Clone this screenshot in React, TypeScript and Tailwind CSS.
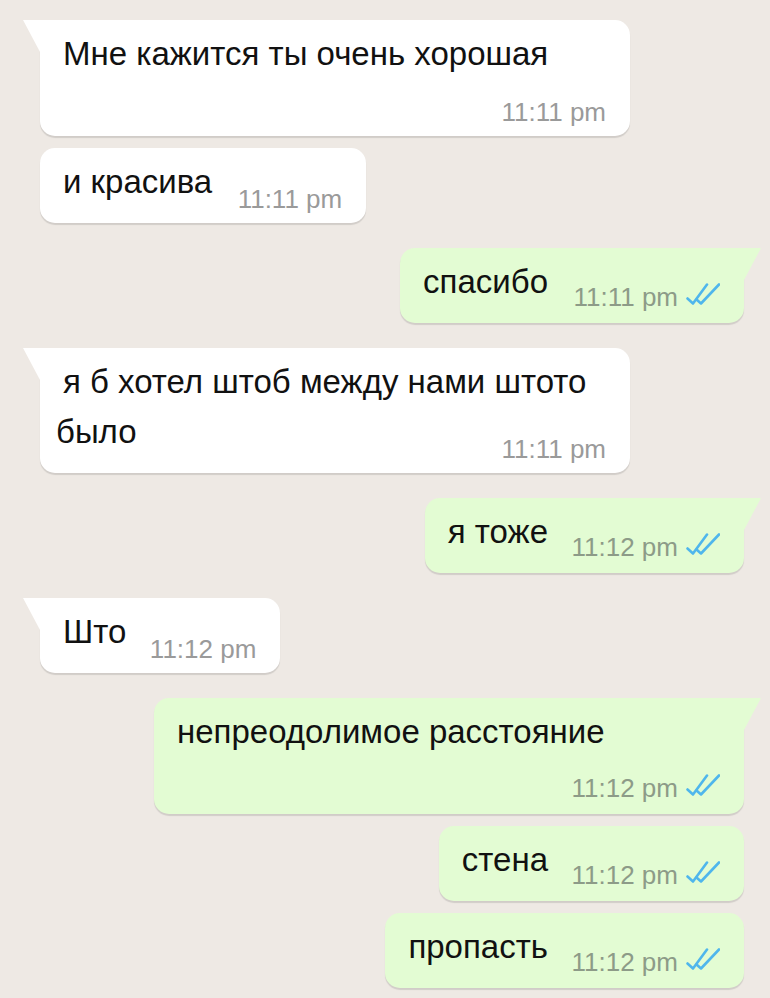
import React from 'react'

type Msg = {
  text: string
  time: string
  out?: boolean
  tail?: boolean
  gap: 'first' | 'same' | 'switch'
}

const MESSAGES: Msg[] = [
  { text: 'Мне кажится ты очень хорошая', time: '11:11 pm', tail: true, gap: 'first' },
  { text: 'и красива', time: '11:11 pm', gap: 'same' },
  { text: 'спасибо', time: '11:11 pm', out: true, tail: true, gap: 'switch' },
  { text: 'я б хотел штоб между нами штото было', time: '11:11 pm', tail: true, gap: 'switch' },
  { text: 'я тоже', time: '11:12 pm', out: true, tail: true, gap: 'switch' },
  { text: 'Што', time: '11:12 pm', tail: true, gap: 'switch' },
  { text: 'непреодолимое расстояние', time: '11:12 pm', out: true, tail: true, gap: 'switch' },
  { text: 'стена', time: '11:12 pm', out: true, gap: 'same' },
  { text: 'пропасть', time: '11:12 pm', out: true, gap: 'same' },
]

const GAP: Record<Msg['gap'], string> = {
  first: 'mt-0',
  same: 'mt-3',
  switch: 'mt-[25px]',
}

export default function App() {
  return (
    <div
      className="min-h-[998px] w-full overflow-hidden bg-[#eee9e4] pt-5 pl-10 pr-[26px] pb-5"
      style={{ fontFamily: '"Liberation Sans", Arial, sans-serif' }}
    >
      <div className="flex flex-col">
        {MESSAGES.map((m, i) => (
          <Bubble key={i} msg={m} />
        ))}
      </div>
    </div>
  )
}

function Bubble({ msg }: { msg: Msg }) {
  const { out, tail } = msg
  return (
    <div className={`flex ${out ? 'justify-end' : 'justify-start'} ${GAP[msg.gap]}`}>
      <div
        className={`relative max-w-[590px] rounded-[15px] pt-[9px] pb-4 pl-4 pr-6 shadow-[0_2px_1px_rgba(0,0,0,0.12)] ${
          out ? 'bg-[#e3fcd3]' : 'bg-white'
        } ${tail ? (out ? 'rounded-tr-none' : 'rounded-tl-none') : ''}`}
      >
        {/* Tail */}
        {tail && (
          <svg
            width="18"
            height="32"
            viewBox="0 0 18 32"
            className={`absolute top-0 ${out ? '-right-[18px]' : '-left-[18px]'}`}
          >
            <polygon
              points={out ? '0,0 17,0 0,32' : '18,0 1,0 18,32'}
              fill={out ? '#e3fcd3' : '#ffffff'}
            />
          </svg>
        )}

        <div className="text-[33px] leading-[41px] text-[#111] indent-[7px] break-words">
          <span className="leading-[50px]">{msg.text}</span>
          <span className={`inline-block h-0 ${out ? 'w-[172px]' : 'w-[130px]'}`} />
        </div>

        {/* Time */}
        <div
          className={`absolute right-6 flex items-end gap-2 ${out ? 'bottom-[17px]' : 'bottom-[15px]'}`}
        >
          <span
            className={`text-[26px] leading-[18px] whitespace-nowrap ${
              out ? 'text-[#8d9b88]' : 'text-[#9a9a9a]'
            }`}
          >
            {msg.time}
          </span>
          {out && <DoubleCheck />}
        </div>
      </div>
    </div>
  )
}

function DoubleCheck() {
  return (
    <svg width="34" height="22" viewBox="0 0 34 22" className="mb-[1px]" fill="none">
      <path
        d="M1.5 15.5 L7 20.5 L21 1.5"
        stroke="#4fb6ec"
        strokeWidth="2.6"
        strokeLinecap="round"
        strokeLinejoin="round"
      />
      <path
        d="M10.5 16.5 L15 20.5 L33 1.5"
        stroke="#4fb6ec"
        strokeWidth="2.6"
        strokeLinecap="round"
        strokeLinejoin="round"
      />
    </svg>
  )
}
